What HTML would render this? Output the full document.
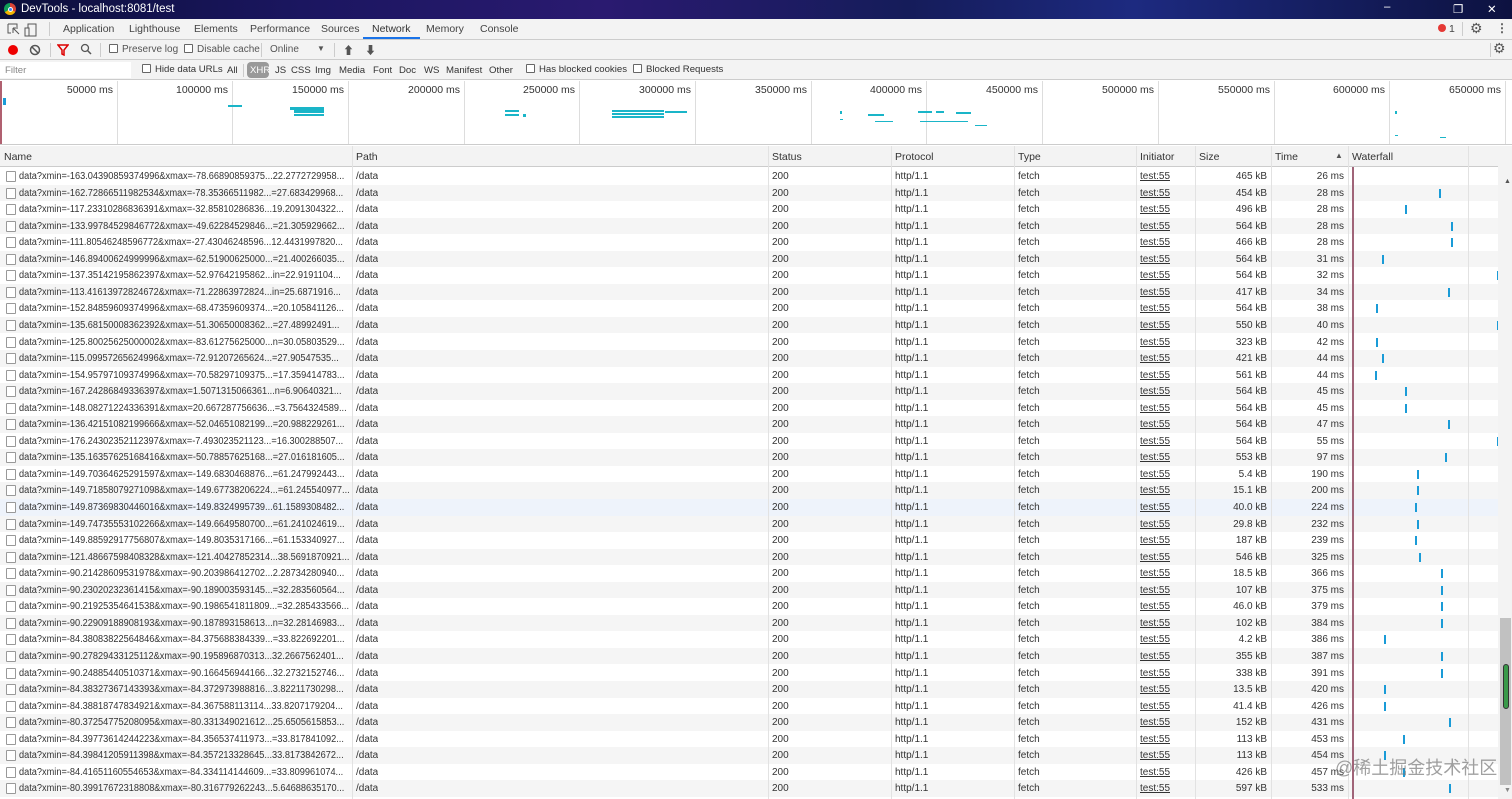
<!DOCTYPE html>
<html><head><meta charset="utf-8">
<style>
*{box-sizing:border-box;margin:0;padding:0}
body{width:1512px;height:799px;overflow:hidden;font-family:"Liberation Sans","Noto Sans CJK SC",sans-serif;font-size:10.5px;color:#333;background:#fff;position:relative}
.abs{position:absolute}
#title{left:0;top:0;width:1512px;height:19px;background:linear-gradient(90deg,#0b0f3a 0%,#1b1660 20%,#2a1a70 40%,#151c5a 60%,#1d2a80 75%,#0d1240 100%);color:#fff;font-size:11.5px}
#tabs{left:0;top:19px;width:1512px;height:21px;background:#f3f3f3;border-bottom:1px solid #ccc}
#tb{left:0;top:40px;width:1512px;height:20px;background:#f3f3f3;border-bottom:1px solid #ccc;font-size:10px}
#fb{left:0;top:60px;width:1512px;height:20px;background:#f3f3f3;border-bottom:1px solid #ccc;font-size:9.6px}
.cb{display:inline-block;width:9px;height:9px;border:1px solid #666;border-radius:1px;background:#fff;vertical-align:-1px;margin-right:4px}
.t{position:absolute;white-space:nowrap}
#ov{left:0;top:81px;width:1512px;height:64px;background:#fff;border-bottom:1px solid #ccc}
#hdr{left:0;top:146px;width:1499px;height:21px;background:#f3f3f3;border-bottom:1px solid #ccc}
.row{position:absolute;left:0;width:1499px;height:16.55px;line-height:16.5px;font-size:10px;white-space:nowrap}
.c{position:absolute;top:1px;overflow:hidden}
.nm{position:absolute;top:1px;left:19px;transform:scaleX(0.92);transform-origin:0 0}
.vl{position:absolute;top:146px;width:1px;height:653px;background:#e2e2e2}
</style></head><body>
<div id="title" class="abs">
 <div class="t" style="left:4px;top:3px;width:12px;height:12px;border-radius:50%;background:conic-gradient(#db4437 0 33%,#f4b400 0 66%,#0f9d58 0);"></div>
 <div class="t" style="left:8px;top:7px;width:5px;height:5px;border-radius:50%;background:#4285f4;border:1px solid #fff"></div>
 <div class="t" style="left:21px;top:3px">DevTools - localhost:8081/test</div>
 <div class="t" style="left:1384px;top:1px">–</div>
 <div class="t" style="left:1453px;top:2px">❐</div>
 <div class="t" style="left:1487px;top:2px">✕</div>
</div>
<div id="tabs" class="abs">
 <svg class="t" style="left:7px;top:4px" width="30" height="14"><path d="M1 1h9v3M1 1v9h3M6 5l6 6M6 5v5M6 5h5" stroke="#555" fill="none"/><rect x="21" y="1" width="8" height="12" stroke="#555" fill="none"/><rect x="18" y="5" width="4" height="8" stroke="#555" fill="#f3f3f3"/></svg>
 <div class="t" style="left:49px;top:3px;width:1px;height:14px;background:#ccc"></div>
 <div class="t" style="left:63px;top:4px;color:#444">Application</div>
 <div class="t" style="left:129px;top:4px;color:#444">Lighthouse</div>
 <div class="t" style="left:194px;top:4px;color:#444">Elements</div>
 <div class="t" style="left:250px;top:4px;color:#444">Performance</div>
 <div class="t" style="left:321px;top:4px;color:#444">Sources</div>
 <div class="t" style="left:372px;top:4px;color:#333">Network</div>
 <div class="t" style="left:363px;top:18px;width:57px;height:2px;background:#1a73e8"></div>
 <div class="t" style="left:426px;top:4px;color:#444">Memory</div>
 <div class="t" style="left:480px;top:4px;color:#444">Console</div>
 <div class="t" style="left:1438px;top:5px;width:8px;height:8px;border-radius:50%;background:#e53935"></div>
 <div class="t" style="left:1449px;top:4px;color:#444">1</div>
 <div class="t" style="left:1462px;top:3px;width:1px;height:14px;background:#ccc"></div>
 <div class="t" style="left:1470px;top:1px;font-size:14px;color:#555">⚙</div>
 <div class="t" style="left:1496px;top:2px;font-size:12px;color:#555;font-weight:bold">⋮</div>
</div>
<div id="tb" class="abs">
 <div class="t" style="left:8px;top:5px;width:10px;height:10px;border-radius:50%;background:#e00"></div>
 <svg class="t" style="left:29px;top:4px" width="12" height="12"><circle cx="6" cy="6" r="4.5" stroke="#555" stroke-width="1.5" fill="none"/><path d="M3 3l6 6" stroke="#555" stroke-width="1.5"/></svg>
 <div class="t" style="left:50px;top:3px;width:1px;height:14px;background:#ccc"></div>
 <svg class="t" style="left:57px;top:4px" width="12" height="12"><path d="M1 1h10L7 6v5L5 10V6z" stroke="#d00" stroke-width="1.5" fill="none"/></svg>
 <svg class="t" style="left:80px;top:3px" width="12" height="12"><circle cx="5" cy="5" r="3.5" stroke="#555" stroke-width="1.3" fill="none"/><path d="M7.5 7.5l3.5 3.5" stroke="#555" stroke-width="1.5"/></svg>
 <div class="t" style="left:100px;top:3px;width:1px;height:14px;background:#ccc"></div>
 <div class="t" style="left:109px;top:4px;color:#555"><span class="cb"></span>Preserve log</div>
 <div class="t" style="left:184px;top:4px;color:#555"><span class="cb"></span>Disable cache</div>
 <div class="t" style="left:261px;top:3px;width:1px;height:14px;background:#ccc"></div>
 <div class="t" style="left:270px;top:4px;color:#555">Online</div>
 <div class="t" style="left:317px;top:4px;color:#555;font-size:8px">▼</div>
 <div class="t" style="left:334px;top:3px;width:1px;height:14px;background:#ccc"></div>
 <div class="t" style="left:343px;top:2px;color:#555;font-size:11px">⬆</div>
 <div class="t" style="left:365px;top:2px;color:#555;font-size:11px">⬇</div>
 <div class="t" style="left:1490px;top:3px;width:1px;height:14px;background:#ccc"></div>
 <div class="t" style="left:1493px;top:0px;font-size:14px;color:#555">⚙</div>
</div>
<div id="fb" class="abs">
 <div class="t" style="left:0;top:2px;width:131px;height:16px;background:#fff"></div>
 <div class="t" style="left:5px;top:5px;color:#888">Filter</div>
 <div class="t" style="left:142px;top:4px;color:#333"><span class="cb"></span>Hide data URLs</div>
 <div class="t" style="left:227px;top:5px;color:#333">All</div>
 <div class="t" style="left:243px;top:4px;width:1px;height:13px;background:#ccc"></div>
 <div class="t" style="left:247px;top:2px;width:22px;height:16px;border-radius:4px;background:#999"></div>
 <div class="t" style="left:250px;top:5px;color:#fff">XHR</div>
 <div class="t" style="left:275px;top:5px">JS</div>
 <div class="t" style="left:291px;top:5px">CSS</div>
 <div class="t" style="left:315px;top:5px">Img</div>
 <div class="t" style="left:339px;top:5px">Media</div>
 <div class="t" style="left:373px;top:5px">Font</div>
 <div class="t" style="left:399px;top:5px">Doc</div>
 <div class="t" style="left:424px;top:5px">WS</div>
 <div class="t" style="left:446px;top:5px">Manifest</div>
 <div class="t" style="left:489px;top:5px">Other</div>
 <div class="t" style="left:526px;top:4px"><span class="cb"></span>Has blocked cookies</div>
 <div class="t" style="left:633px;top:4px"><span class="cb"></span>Blocked Requests</div>
</div>
<div id="ov" class="abs"></div>
<div id="hdr" class="abs"></div>
<div id="rows"></div>
<script>
var ov=document.getElementById('ov'),h='';
var labs=['50000','100000','150000','200000','250000','300000','350000','400000','450000','500000','550000','600000','650000'];
for(var i=0;i<13;i++){var x=117+i*115.7;h+='<div class="t" style="left:'+(x|0)+'px;top:0;width:1px;height:63px;background:#ddd"></div><div class="t" style="left:'+((x-100)|0)+'px;top:3px;width:96px;text-align:right;font-size:10.5px">'+labs[i]+' ms</div>';}
h+='<div class="t" style="left:0;top:0;width:2px;height:63px;background:#b06070"></div><div class="t" style="left:3px;top:17px;width:3px;height:7px;background:#1a9bd7"></div>';
var bl=[[228,24,14,2],[290,26,34,3],[294,29,30,3],[294,33,30,2],[505,29,14,2],[505,33,14,2],[523,33,3,3],[612,29,52,2],[612,32,52,2],[612,35,52,2],[665,30,22,2],[840,30,2,3],[840,38,3,1],[868,33,16,2],[875,40,18,1],[918,30,14,2],[936,30,8,2],[956,31,15,2],[920,40,48,1],[975,44,12,1],[1395,30,2,3],[1395,54,3,1],[1440,56,6,1]];
bl.forEach(function(b){h+='<div class="t" style="left:'+b[0]+'px;top:'+b[1]+'px;width:'+b[2]+'px;height:'+b[3]+'px;background:#1ab5c8"></div>'});
ov.innerHTML=h;
var cols=[[0,'Name'],[352,'Path'],[768,'Status'],[891,'Protocol'],[1014,'Type'],[1136,'Initiator'],[1195,'Size'],[1271,'Time'],[1348,'Waterfall']];
var hd=document.getElementById('hdr'),hh='';
cols.forEach(function(c){hh+='<div class="t" style="left:'+(c[0]+4)+'px;top:5px">'+c[1]+'</div>'});
hh+='<div class="t" style="left:1335px;top:5px;font-size:8px;color:#555">▲</div>';
hd.innerHTML=hh;
var R=[
['-163.04390859374996&xmax=-78.66890859375...22.2772729958...','465 kB','26 ms',0],
['-162.72866511982534&xmax=-78.35366511982...=27.683429968...','454 kB','28 ms',1439],
['-117.23310286836391&xmax=-32.85810286836...19.2091304322...','496 kB','28 ms',1405],
['-133.99784529846772&xmax=-49.62284529846...=21.305929662...','564 kB','28 ms',1451],
['-111.80546248596772&xmax=-27.43046248596...12.4431997820...','466 kB','28 ms',1451],
['-146.89400624999996&xmax=-62.51900625000...=21.400266035...','564 kB','31 ms',1382],
['-137.35142195862397&xmax=-52.97642195862...in=22.9191104...','564 kB','32 ms',1497],
['-113.41613972824672&xmax=-71.22863972824...in=25.6871916...','417 kB','34 ms',1448],
['-152.84859609374996&xmax=-68.47359609374...=20.105841126...','564 kB','38 ms',1376],
['-135.68150008362392&xmax=-51.30650008362...=27.48992491...','550 kB','40 ms',1497],
['-125.80025625000002&xmax=-83.61275625000...n=30.05803529...','323 kB','42 ms',1376],
['-115.09957265624996&xmax=-72.91207265624...=27.90547535...','421 kB','44 ms',1382],
['-154.95797109374996&xmax=-70.58297109375...=17.359414783...','561 kB','44 ms',1375],
['-167.24286849336397&xmax=1.5071315066361...n=6.90640321...','564 kB','45 ms',1405],
['-148.08271224336391&xmax=20.667287756636...=3.7564324589...','564 kB','45 ms',1405],
['-136.42151082199666&xmax=-52.04651082199...=20.988229261...','564 kB','47 ms',1448],
['-176.24302352112397&xmax=-7.493023521123...=16.300288507...','564 kB','55 ms',1497],
['-135.16357625168416&xmax=-50.78857625168...=27.016181605...','553 kB','97 ms',1445],
['-149.70364625291597&xmax=-149.6830468876...=61.247992443...','5.4 kB','190 ms',1417],
['-149.71858079271098&xmax=-149.67738206224...=61.245540977...','15.1 kB','200 ms',1417],
['-149.87369830446016&xmax=-149.8324995739...61.1589308482...','40.0 kB','224 ms',1415],
['-149.74735553102266&xmax=-149.6649580700...=61.241024619...','29.8 kB','232 ms',1417],
['-149.88592917756807&xmax=-149.8035317166...=61.153340927...','187 kB','239 ms',1415],
['-121.48667598408328&xmax=-121.40427852314...38.5691870921...','546 kB','325 ms',1419],
['-90.21428609531978&xmax=-90.203986412702...2.28734280940...','18.5 kB','366 ms',1441],
['-90.23020232361415&xmax=-90.189003593145...=32.283560564...','107 kB','375 ms',1441],
['-90.21925354641538&xmax=-90.1986541811809...=32.285433566...','46.0 kB','379 ms',1441],
['-90.22909188908193&xmax=-90.187893158613...n=32.28146983...','102 kB','384 ms',1441],
['-84.38083822564846&xmax=-84.375688384339...=33.822692201...','4.2 kB','386 ms',1384],
['-90.27829433125112&xmax=-90.195896870313...32.2667562401...','355 kB','387 ms',1441],
['-90.24885440510371&xmax=-90.166456944166...32.2732152746...','338 kB','391 ms',1441],
['-84.38327367143393&xmax=-84.372973988816...3.82211730298...','13.5 kB','420 ms',1384],
['-84.38818747834921&xmax=-84.367588113114...33.8207179204...','41.4 kB','426 ms',1384],
['-80.37254775208095&xmax=-80.331349021612...25.6505615853...','152 kB','431 ms',1449],
['-84.39773614244223&xmax=-84.356537411973...=33.817841092...','113 kB','453 ms',1403],
['-84.39841205911398&xmax=-84.357213328645...33.8173842672...','113 kB','454 ms',1384],
['-84.41651160554653&xmax=-84.334114144609...=33.809961074...','426 kB','457 ms',1403],
['-80.39917672318808&xmax=-80.316779262243...5.64688635170...','597 kB','533 ms',1449]];
var o='';
R.forEach(function(r,i){
 var y=168+i*16.55, bg=i==20?'#eef3fb':(i%2?'#f5f5f5':'#fff');
 o+='<div class="row" style="top:'+y+'px;background:'+bg+'">'+
 '<div class="c" style="left:6px;top:3px;width:10px;height:11px;border:1px solid #999;border-radius:1px;background:#fff"></div>'+
 '<div class="nm">data?xmin='+r[0].replace(/&/g,'&amp;')+'</div>'+
 '<div class="c" style="left:356px">/data</div><div class="c" style="left:772px">200</div>'+
 '<div class="c" style="left:895px">http/1.1</div><div class="c" style="left:1018px">fetch</div>'+
 '<div class="c" style="left:1140px;text-decoration:underline">test:55</div>'+
 '<div class="c" style="left:1195px;width:72px;text-align:right">'+r[1]+'</div>'+
 '<div class="c" style="left:1271px;width:73px;text-align:right">'+r[2]+'</div>'+
 (r[3]?'<div class="c" style="left:'+r[3]+'px;top:4px;width:2px;height:9px;background:#1a9bd7"></div>':'')+
 '</div>';
});
var lines=[352,768,891,1014,1136,1195,1271,1348,1468];
lines.forEach(function(x){o+='<div class="vl" style="left:'+x+'px"></div>'});
o+='<div class="abs" style="left:1352px;top:167px;width:2px;height:632px;background:#a06478"></div>';
o+='<div class="abs" style="left:1498px;top:146px;width:14px;height:653px;background:#f3f3f3"></div>';
o+='<div class="abs" style="left:1504px;top:178px;font-size:7px;color:#555">▲</div>';
o+='<div class="abs" style="left:1500px;top:618px;width:11px;height:167px;background:#c1c1c1"></div>';
o+='<div class="abs" style="left:1503px;top:664px;width:6px;height:45px;border-radius:3px;background:#3a9a4a;border:1px solid #333"></div>';
o+='<div class="abs" style="left:1504px;top:787px;font-size:7px;color:#888">▼</div>';
o+='<div class="abs" style="left:1335px;top:754px;font-size:18px;color:rgba(120,120,120,.7);white-space:nowrap">@稀土掘金技术社区</div>';
document.getElementById('rows').innerHTML=o;
</script>
</body></html>
